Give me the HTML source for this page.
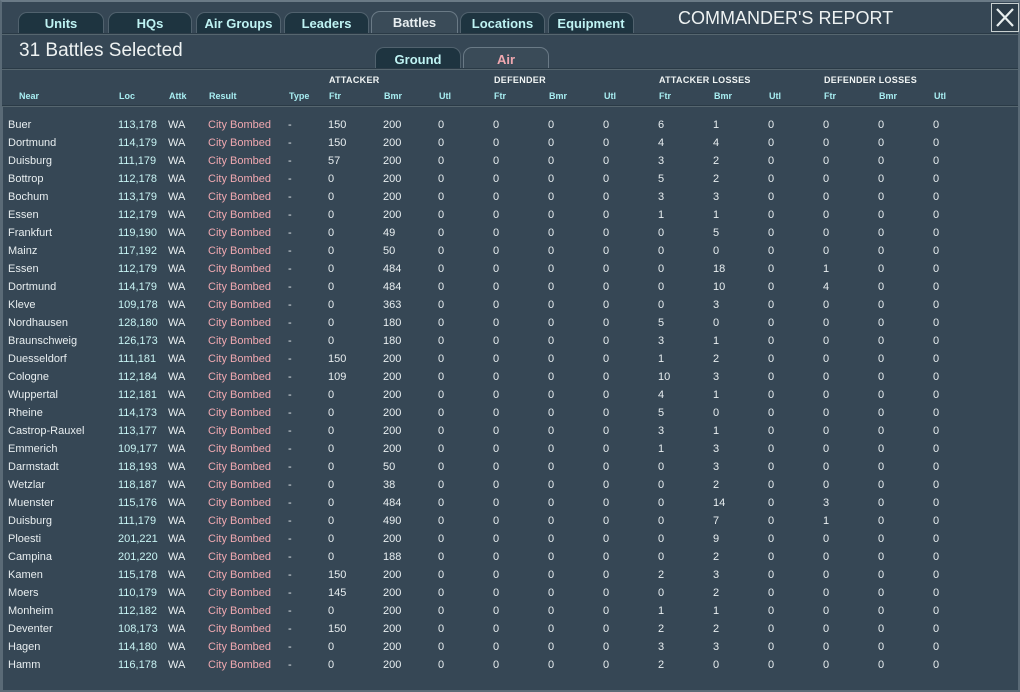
<!DOCTYPE html>
<html><head><meta charset="utf-8"><style>
*{margin:0;padding:0;box-sizing:border-box}
body{width:1020px;height:692px;background:#364755;font-family:"Liberation Sans",sans-serif;position:relative;overflow:hidden;color:#e8eef0}
.frame{position:absolute;left:0;top:0;width:1020px;height:692px;border:2px solid #5a6a76;border-top-color:#6a7a86}
.tab{position:absolute;top:12px;height:22px;background:#1e3440;border:1px solid #51626e;border-bottom:none;border-radius:9px 9px 0 0;color:#bff3f3;font-size:13px;font-weight:600;text-align:center;line-height:22px}
.tab.act{top:11px;height:24px;background:#3a4b58;color:#e8eef0;border-color:#6a7a86}
.hline{position:absolute;left:2px;right:2px;height:2px;background:#2a3a46;border-bottom:1px solid #56666f}
.title{position:absolute;left:678px;top:8px;font-size:18px;color:#eef2f2}
.close{position:absolute;left:991px;top:3px;width:28px;height:29px;border:1px solid #c8d0d0;background:#2c3c48}
.sel{position:absolute;left:19px;top:40px;font-size:19px;color:#eef2f2}
.sub{position:absolute;top:47px;height:23px;width:86px;background:#1e3440;border:1px solid #51626e;border-bottom:none;border-radius:9px 9px 0 0;color:#bff3f3;font-size:13px;font-weight:600;text-align:center;line-height:24px}
.sub.act{background:#3a4b58;color:#f0a8b0;border-color:#6a7a86}
.gh{position:absolute;top:75px;font-size:9px;font-weight:bold;color:#f0f4f4;letter-spacing:.3px}
.ch{position:absolute;top:91px;font-size:9px;font-weight:bold;color:#a8eef2}
table{position:absolute;left:8px;top:116px;border-collapse:collapse;table-layout:fixed;font-size:11px}
td{height:18px;padding:0;white-space:nowrap;color:#e8eef0}
td:nth-child(2){color:#c8f4f4}
td:nth-child(4){color:#f0a8b0}
</style></head><body>
<div class="frame"></div>
<div class="tab" style="left:18px;width:86px">Units</div>
<div class="tab" style="left:108px;width:84px">HQs</div>
<div class="tab" style="left:196px;width:85px">Air Groups</div>
<div class="tab" style="left:284px;width:85px">Leaders</div>
<div class="tab act" style="left:371px;width:87px">Battles</div>
<div class="tab" style="left:460px;width:85px">Locations</div>
<div class="tab" style="left:548px;width:86px">Equipment</div>
<div class="title">COMMANDER'S REPORT</div>
<div class="close"><svg width="26" height="27" viewBox="0 0 26 27"><path d="M5 5L21 22M21 5L5 22" stroke="#e8eeee" stroke-width="2.2"/></svg></div>
<div class="hline" style="top:33px"></div>
<div class="sel">31 Battles Selected</div>
<div class="sub" style="left:375px">Ground</div>
<div class="sub act" style="left:463px">Air</div>
<div class="hline" style="top:68px"></div>
<div class="gh" style="left:329px">ATTACKER</div>
<div class="gh" style="left:494px">DEFENDER</div>
<div class="gh" style="left:659px">ATTACKER LOSSES</div>
<div class="gh" style="left:824px">DEFENDER LOSSES</div>
<div class="ch" style="left:19px">Near</div><div class="ch" style="left:119px">Loc</div><div class="ch" style="left:169px">Attk</div><div class="ch" style="left:209px">Result</div><div class="ch" style="left:289px">Type</div>
<div class="ch" style="left:329px">Ftr</div><div class="ch" style="left:384px">Bmr</div><div class="ch" style="left:439px">Utl</div>
<div class="ch" style="left:494px">Ftr</div><div class="ch" style="left:549px">Bmr</div><div class="ch" style="left:604px">Utl</div>
<div class="ch" style="left:659px">Ftr</div><div class="ch" style="left:714px">Bmr</div><div class="ch" style="left:769px">Utl</div>
<div class="ch" style="left:824px">Ftr</div><div class="ch" style="left:879px">Bmr</div><div class="ch" style="left:934px">Utl</div>
<div class="hline" style="top:105px"></div>
<div style="position:absolute;left:2px;top:107px;width:1px;height:583px;background:#5a6a76"></div>
<table>
<colgroup><col style="width:110px"><col style="width:50px"><col style="width:40px"><col style="width:80px"><col style="width:40px"><col style="width:55px"><col style="width:55px"><col style="width:55px"><col style="width:55px"><col style="width:55px"><col style="width:55px"><col style="width:55px"><col style="width:55px"><col style="width:55px"><col style="width:55px"><col style="width:55px"><col style="width:55px"></colgroup>
<tr><td>Buer</td><td>113,178</td><td>WA</td><td>City Bombed</td><td>-</td><td>150</td><td>200</td><td>0</td><td>0</td><td>0</td><td>0</td><td>6</td><td>1</td><td>0</td><td>0</td><td>0</td><td>0</td></tr>
<tr><td>Dortmund</td><td>114,179</td><td>WA</td><td>City Bombed</td><td>-</td><td>150</td><td>200</td><td>0</td><td>0</td><td>0</td><td>0</td><td>4</td><td>4</td><td>0</td><td>0</td><td>0</td><td>0</td></tr>
<tr><td>Duisburg</td><td>111,179</td><td>WA</td><td>City Bombed</td><td>-</td><td>57</td><td>200</td><td>0</td><td>0</td><td>0</td><td>0</td><td>3</td><td>2</td><td>0</td><td>0</td><td>0</td><td>0</td></tr>
<tr><td>Bottrop</td><td>112,178</td><td>WA</td><td>City Bombed</td><td>-</td><td>0</td><td>200</td><td>0</td><td>0</td><td>0</td><td>0</td><td>5</td><td>2</td><td>0</td><td>0</td><td>0</td><td>0</td></tr>
<tr><td>Bochum</td><td>113,179</td><td>WA</td><td>City Bombed</td><td>-</td><td>0</td><td>200</td><td>0</td><td>0</td><td>0</td><td>0</td><td>3</td><td>3</td><td>0</td><td>0</td><td>0</td><td>0</td></tr>
<tr><td>Essen</td><td>112,179</td><td>WA</td><td>City Bombed</td><td>-</td><td>0</td><td>200</td><td>0</td><td>0</td><td>0</td><td>0</td><td>1</td><td>1</td><td>0</td><td>0</td><td>0</td><td>0</td></tr>
<tr><td>Frankfurt</td><td>119,190</td><td>WA</td><td>City Bombed</td><td>-</td><td>0</td><td>49</td><td>0</td><td>0</td><td>0</td><td>0</td><td>0</td><td>5</td><td>0</td><td>0</td><td>0</td><td>0</td></tr>
<tr><td>Mainz</td><td>117,192</td><td>WA</td><td>City Bombed</td><td>-</td><td>0</td><td>50</td><td>0</td><td>0</td><td>0</td><td>0</td><td>0</td><td>0</td><td>0</td><td>0</td><td>0</td><td>0</td></tr>
<tr><td>Essen</td><td>112,179</td><td>WA</td><td>City Bombed</td><td>-</td><td>0</td><td>484</td><td>0</td><td>0</td><td>0</td><td>0</td><td>0</td><td>18</td><td>0</td><td>1</td><td>0</td><td>0</td></tr>
<tr><td>Dortmund</td><td>114,179</td><td>WA</td><td>City Bombed</td><td>-</td><td>0</td><td>484</td><td>0</td><td>0</td><td>0</td><td>0</td><td>0</td><td>10</td><td>0</td><td>4</td><td>0</td><td>0</td></tr>
<tr><td>Kleve</td><td>109,178</td><td>WA</td><td>City Bombed</td><td>-</td><td>0</td><td>363</td><td>0</td><td>0</td><td>0</td><td>0</td><td>0</td><td>3</td><td>0</td><td>0</td><td>0</td><td>0</td></tr>
<tr><td>Nordhausen</td><td>128,180</td><td>WA</td><td>City Bombed</td><td>-</td><td>0</td><td>180</td><td>0</td><td>0</td><td>0</td><td>0</td><td>5</td><td>0</td><td>0</td><td>0</td><td>0</td><td>0</td></tr>
<tr><td>Braunschweig</td><td>126,173</td><td>WA</td><td>City Bombed</td><td>-</td><td>0</td><td>180</td><td>0</td><td>0</td><td>0</td><td>0</td><td>3</td><td>1</td><td>0</td><td>0</td><td>0</td><td>0</td></tr>
<tr><td>Duesseldorf</td><td>111,181</td><td>WA</td><td>City Bombed</td><td>-</td><td>150</td><td>200</td><td>0</td><td>0</td><td>0</td><td>0</td><td>1</td><td>2</td><td>0</td><td>0</td><td>0</td><td>0</td></tr>
<tr><td>Cologne</td><td>112,184</td><td>WA</td><td>City Bombed</td><td>-</td><td>109</td><td>200</td><td>0</td><td>0</td><td>0</td><td>0</td><td>10</td><td>3</td><td>0</td><td>0</td><td>0</td><td>0</td></tr>
<tr><td>Wuppertal</td><td>112,181</td><td>WA</td><td>City Bombed</td><td>-</td><td>0</td><td>200</td><td>0</td><td>0</td><td>0</td><td>0</td><td>4</td><td>1</td><td>0</td><td>0</td><td>0</td><td>0</td></tr>
<tr><td>Rheine</td><td>114,173</td><td>WA</td><td>City Bombed</td><td>-</td><td>0</td><td>200</td><td>0</td><td>0</td><td>0</td><td>0</td><td>5</td><td>0</td><td>0</td><td>0</td><td>0</td><td>0</td></tr>
<tr><td>Castrop-Rauxel</td><td>113,177</td><td>WA</td><td>City Bombed</td><td>-</td><td>0</td><td>200</td><td>0</td><td>0</td><td>0</td><td>0</td><td>3</td><td>1</td><td>0</td><td>0</td><td>0</td><td>0</td></tr>
<tr><td>Emmerich</td><td>109,177</td><td>WA</td><td>City Bombed</td><td>-</td><td>0</td><td>200</td><td>0</td><td>0</td><td>0</td><td>0</td><td>1</td><td>3</td><td>0</td><td>0</td><td>0</td><td>0</td></tr>
<tr><td>Darmstadt</td><td>118,193</td><td>WA</td><td>City Bombed</td><td>-</td><td>0</td><td>50</td><td>0</td><td>0</td><td>0</td><td>0</td><td>0</td><td>3</td><td>0</td><td>0</td><td>0</td><td>0</td></tr>
<tr><td>Wetzlar</td><td>118,187</td><td>WA</td><td>City Bombed</td><td>-</td><td>0</td><td>38</td><td>0</td><td>0</td><td>0</td><td>0</td><td>0</td><td>2</td><td>0</td><td>0</td><td>0</td><td>0</td></tr>
<tr><td>Muenster</td><td>115,176</td><td>WA</td><td>City Bombed</td><td>-</td><td>0</td><td>484</td><td>0</td><td>0</td><td>0</td><td>0</td><td>0</td><td>14</td><td>0</td><td>3</td><td>0</td><td>0</td></tr>
<tr><td>Duisburg</td><td>111,179</td><td>WA</td><td>City Bombed</td><td>-</td><td>0</td><td>490</td><td>0</td><td>0</td><td>0</td><td>0</td><td>0</td><td>7</td><td>0</td><td>1</td><td>0</td><td>0</td></tr>
<tr><td>Ploesti</td><td>201,221</td><td>WA</td><td>City Bombed</td><td>-</td><td>0</td><td>200</td><td>0</td><td>0</td><td>0</td><td>0</td><td>0</td><td>9</td><td>0</td><td>0</td><td>0</td><td>0</td></tr>
<tr><td>Campina</td><td>201,220</td><td>WA</td><td>City Bombed</td><td>-</td><td>0</td><td>188</td><td>0</td><td>0</td><td>0</td><td>0</td><td>0</td><td>2</td><td>0</td><td>0</td><td>0</td><td>0</td></tr>
<tr><td>Kamen</td><td>115,178</td><td>WA</td><td>City Bombed</td><td>-</td><td>150</td><td>200</td><td>0</td><td>0</td><td>0</td><td>0</td><td>2</td><td>3</td><td>0</td><td>0</td><td>0</td><td>0</td></tr>
<tr><td>Moers</td><td>110,179</td><td>WA</td><td>City Bombed</td><td>-</td><td>145</td><td>200</td><td>0</td><td>0</td><td>0</td><td>0</td><td>0</td><td>2</td><td>0</td><td>0</td><td>0</td><td>0</td></tr>
<tr><td>Monheim</td><td>112,182</td><td>WA</td><td>City Bombed</td><td>-</td><td>0</td><td>200</td><td>0</td><td>0</td><td>0</td><td>0</td><td>1</td><td>1</td><td>0</td><td>0</td><td>0</td><td>0</td></tr>
<tr><td>Deventer</td><td>108,173</td><td>WA</td><td>City Bombed</td><td>-</td><td>150</td><td>200</td><td>0</td><td>0</td><td>0</td><td>0</td><td>2</td><td>2</td><td>0</td><td>0</td><td>0</td><td>0</td></tr>
<tr><td>Hagen</td><td>114,180</td><td>WA</td><td>City Bombed</td><td>-</td><td>0</td><td>200</td><td>0</td><td>0</td><td>0</td><td>0</td><td>3</td><td>3</td><td>0</td><td>0</td><td>0</td><td>0</td></tr>
<tr><td>Hamm</td><td>116,178</td><td>WA</td><td>City Bombed</td><td>-</td><td>0</td><td>200</td><td>0</td><td>0</td><td>0</td><td>0</td><td>2</td><td>0</td><td>0</td><td>0</td><td>0</td><td>0</td></tr>
</table>
</body></html>
